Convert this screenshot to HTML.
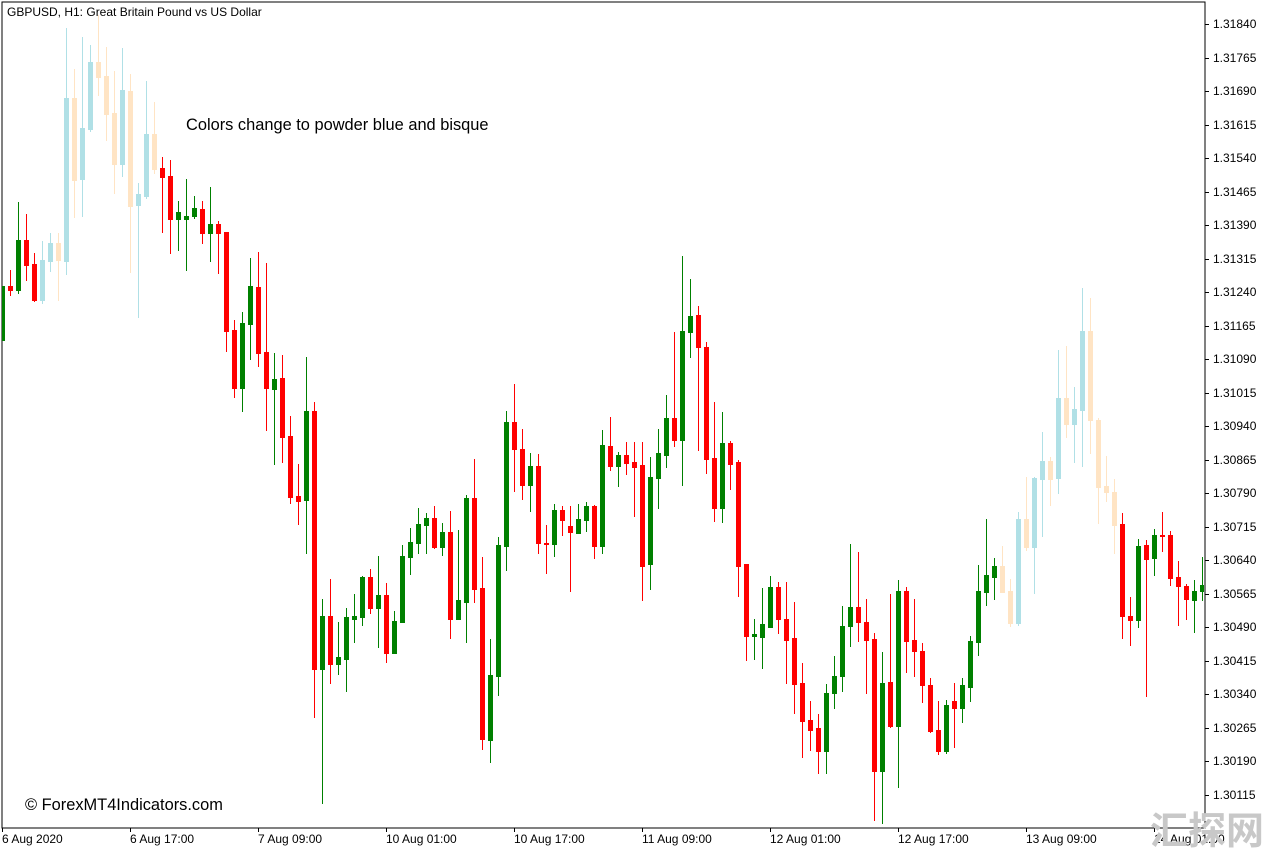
<!DOCTYPE html>
<html><head><meta charset="utf-8"><style>
html,body{margin:0;padding:0;background:#fff;width:1275px;height:852px;overflow:hidden;font-family:"Liberation Sans",sans-serif}
#c{position:absolute;left:0;top:0}
.p{position:absolute;left:1213px;font-size:12px;line-height:12px;color:#000}
.d{position:absolute;top:833px;font-size:12px;line-height:12px;color:#000;white-space:nowrap}
#wm{position:absolute;left:1150px;top:806px;font-family:"Noto Sans CJK SC","WenQuanYi Zen Hei",sans-serif;font-size:38px;line-height:44px;font-weight:bold;color:#c8c8c8;white-space:nowrap}
</style></head><body>
<svg id="c" width="1275" height="852" xmlns="http://www.w3.org/2000/svg">
<rect x="2" y="2" width="1203" height="826" fill="none" stroke="#000" stroke-width="1"/>
<g id="cd"></g>
<g id="tk" stroke="#000" stroke-width="1"></g>
<text x="7" y="16" font-family="Liberation Sans, sans-serif" font-size="12">GBPUSD, H1:  Great Britain Pound vs US Dollar</text>
<text x="186" y="130" font-family="Liberation Sans, sans-serif" font-size="16.4">Colors change to powder blue and bisque</text>
<text x="25" y="810" font-family="Liberation Sans, sans-serif" font-size="16.4">© ForexMT4Indicators.com</text>
</svg>
<div class="p" style="top:18px">1.31840</div>
<div class="p" style="top:52px">1.31765</div>
<div class="p" style="top:85px">1.31690</div>
<div class="p" style="top:119px">1.31615</div>
<div class="p" style="top:152px">1.31540</div>
<div class="p" style="top:186px">1.31465</div>
<div class="p" style="top:219px">1.31390</div>
<div class="p" style="top:253px">1.31315</div>
<div class="p" style="top:286px">1.31240</div>
<div class="p" style="top:320px">1.31165</div>
<div class="p" style="top:353px">1.31090</div>
<div class="p" style="top:387px">1.31015</div>
<div class="p" style="top:420px">1.30940</div>
<div class="p" style="top:454px">1.30865</div>
<div class="p" style="top:487px">1.30790</div>
<div class="p" style="top:521px">1.30715</div>
<div class="p" style="top:554px">1.30640</div>
<div class="p" style="top:588px">1.30565</div>
<div class="p" style="top:621px">1.30490</div>
<div class="p" style="top:655px">1.30415</div>
<div class="p" style="top:688px">1.30340</div>
<div class="p" style="top:722px">1.30265</div>
<div class="p" style="top:755px">1.30190</div>
<div class="p" style="top:789px">1.30115</div>
<div class="d" style="left:2px">6 Aug 2020</div>
<div class="d" style="left:130px">6 Aug 17:00</div>
<div class="d" style="left:258px">7 Aug 09:00</div>
<div class="d" style="left:386px">10 Aug 01:00</div>
<div class="d" style="left:514px">10 Aug 17:00</div>
<div class="d" style="left:642px">11 Aug 09:00</div>
<div class="d" style="left:770px">12 Aug 01:00</div>
<div class="d" style="left:898px">12 Aug 17:00</div>
<div class="d" style="left:1026px">13 Aug 09:00</div>
<div class="d" style="left:1154px">14 Aug 01:00</div>
<div id="wm">汇探网</div>
<script>
var D=[
"g,286,340,286,340","r,286,290,270,295","g,240,290,202,293","r,240,265,214,280","r,264,300,253,301","b,260,300,241,303","b,243,261,233,271","q,243,260,233,300","b,98,261,28,274","q,98,180,69,217",
"b,128,179,37,216","b,62,129,45,131","q,62,77,15,95","q,76,114,47,140","q,113,164,71,193","b,90,164,48,176","q,91,206,74,272","b,194,205,183,317","b,134,196,81,198","q,134,169,102,173",
"r,168,177,157,232","r,176,219,160,253","g,212,219,201,250","g,216,219,179,270","g,208,216,196,218","r,209,233,201,243","g,224,233,187,261","r,224,233,221,273","r,232,331,232,351","r,330,388,320,397",
"g,323,388,312,411","g,286,324,258,359","r,287,353,252,366","r,352,388,263,430","g,379,389,353,464","r,378,437,355,462","r,436,497,416,503","r,496,501,464,524","g,411,500,357,553","r,411,669,402,717",
"g,616,669,599,803","r,616,664,579,683","g,657,664,622,674","g,617,659,608,691","g,616,619,594,642","g,577,617,576,625","r,577,608,569,613","g,595,608,556,647","r,595,653,583,662","g,621,653,611,653",
"g,556,622,545,622","g,542,557,528,574","g,524,543,508,553","g,518,525,513,553","r,518,547,506,548","g,532,547,523,555","r,532,619,511,638","g,600,619,530,619","g,498,602,495,642","r,498,589,459,602",
"r,588,739,557,749","g,675,740,639,762","g,545,676,537,695","g,422,546,411,570","r,422,449,384,491","r,449,485,429,499","g,466,485,453,511","r,466,543,454,553","r,543,544,525,573","g,510,544,504,556",
"r,510,520,506,535","r,526,532,506,591","g,519,533,504,531","g,506,520,502,531","r,506,546,505,558","g,445,546,430,553","r,446,466,417,470","g,455,466,452,486","r,455,463,442,474","r,462,467,442,516",
"r,465,566,442,600","g,477,564,457,589","g,453,478,429,508","g,418,455,395,467","r,418,440,332,446","g,331,440,256,485","g,316,332,279,357","r,315,347,306,450","r,347,459,342,473","r,458,508,402,521",
"g,443,508,412,522","r,443,464,441,489","r,462,566,460,596","r,564,636,564,660","g,634,636,619,659","g,624,637,588,668","g,587,627,576,627","r,587,619,582,633","r,619,640,582,683","r,638,684,602,713",
"r,683,721,663,757","r,720,730,701,750","r,728,751,714,773","g,693,751,684,773","g,676,693,656,708","g,626,676,606,691","g,607,626,544,646","r,607,622,552,641","r,622,640,599,693","r,639,771,633,820",
"g,683,771,652,823","r,682,726,594,727","g,591,726,580,787","r,591,641,587,672","r,640,651,599,676","r,651,685,643,702","r,685,731,678,732","r,730,751,701,754","g,705,751,700,753","r,701,708,683,747",
"g,685,708,678,722","g,641,687,636,701","g,591,642,565,655","g,575,592,519,605","g,566,577,558,599","q,566,592,546,592","q,591,623,579,626","b,519,623,512,625","q,519,547,477,550","b,478,547,477,593",
"b,461,479,432,536","q,461,479,457,505","b,398,478,350,493","q,398,424,346,437","b,409,424,387,462","b,331,410,288,466","q,331,420,298,453","q,420,487,418,523","q,486,492,456,501","q,492,525,479,553",
"r,524,616,513,638","r,616,620,597,645","g,546,620,539,627","r,545,559,540,696","g,535,558,529,575","r,535,536,512,551","r,535,578,531,585","r,577,586,561,625","r,586,599,584,619","g,591,600,580,632",
"g,585,591,557,600"];
var C={g:"#008000",r:"#ff0000",b:"#b0e0e6",q:"#ffe4c4"};
var s="";
D.forEach(function(e,k){var a=e.split(","),c=C[a[0]],t=+a[1],b=+a[2],h=+a[3],l=+a[4],x=2+8*k;
var x0=Math.max(3,x-2),x1=Math.min(1204,x+3);
if(x<1204)s+='<rect x="'+x+'" y="'+h+'" width="1" height="'+(l-h+1)+'" fill="'+c+'"/>';
s+='<rect x="'+x0+'" y="'+t+'" width="'+(x1-x0)+'" height="'+(b-t+1)+'" fill="'+c+'"/>';});
document.getElementById("cd").innerHTML=s;
var t="";
for(var i=0;i<24;i++){var y=Math.round(24+i*33.52)+0.5;t+='<line x1="1205" y1="'+y+'" x2="1209" y2="'+y+'"/>';}
[2,130,258,386,514,642,770,898,1026,1154].forEach(function(x){t+='<line x1="'+(x+0.5)+'" y1="828" x2="'+(x+0.5)+'" y2="832"/>';});
document.getElementById("tk").innerHTML=t;
</script>
</body></html>
